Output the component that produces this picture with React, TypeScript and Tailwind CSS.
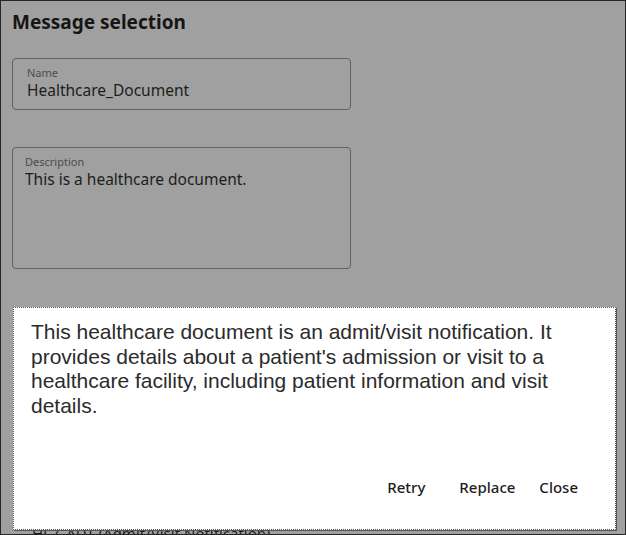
export default function App() {
  return (
    <div className="relative w-[626px] h-[535px] overflow-hidden border border-[#262626] bg-[#a0a0a0] px-[11px] font-['Noto_Sans',sans-serif]">
      <h1 className="pt-[7px] text-[19px] leading-[28px] font-bold text-[#161513]">Message selection</h1>

      <div className="mt-[22px] w-[339px] h-[52px] rounded-[4px] border border-[#626262] px-[14px] pt-[7px]">
        <div className="text-[11px] leading-[14px] text-[#4d4d4d]">Name</div>
        <div className="text-[15.5px] leading-[20px] text-[#1d1d1d]">Healthcare_Document</div>
      </div>

      <div className="mt-[37px] w-[339px] h-[122px] rounded-[4px] border border-[#626262] px-[12px] pt-[7px]">
        <div className="text-[11px] leading-[14px] text-[#4d4d4d]">Description</div>
        <div className="text-[15.5px] leading-[20px] text-[#1d1d1d]">This is a healthcare document.</div>
      </div>

      <div className="mt-[254px] pl-[20px] text-[15px] leading-[20px] text-[#1d1d1d]">HL7_ADT (Admit/Visit Notification)</div>

      <div className="absolute left-[12px] top-[306px] w-[603px] h-[223px] bg-white border border-dotted border-[#555] border-r-solid border-r-[#444] shadow-[1px_1px_0_#555]">
        <p className="w-[575px] pl-[17px] pt-[12px] font-['Liberation_Sans',Arial,sans-serif] text-[21px] leading-[24.5px] text-[#2b2b2b]">
          This healthcare document is an admit/visit notification. It provides details about a patient's admission or visit to a healthcare facility, including patient information and visit details.
        </p>
        <div className="absolute right-[37px] top-[168px] flex items-center text-[15px] font-medium text-[#1d1d1d]">
          <button className="mr-[34px]">Retry</button>
          <button className="mr-[24px]">Replace</button>
          <button>Close</button>
        </div>
      </div>
    </div>
  );
}
